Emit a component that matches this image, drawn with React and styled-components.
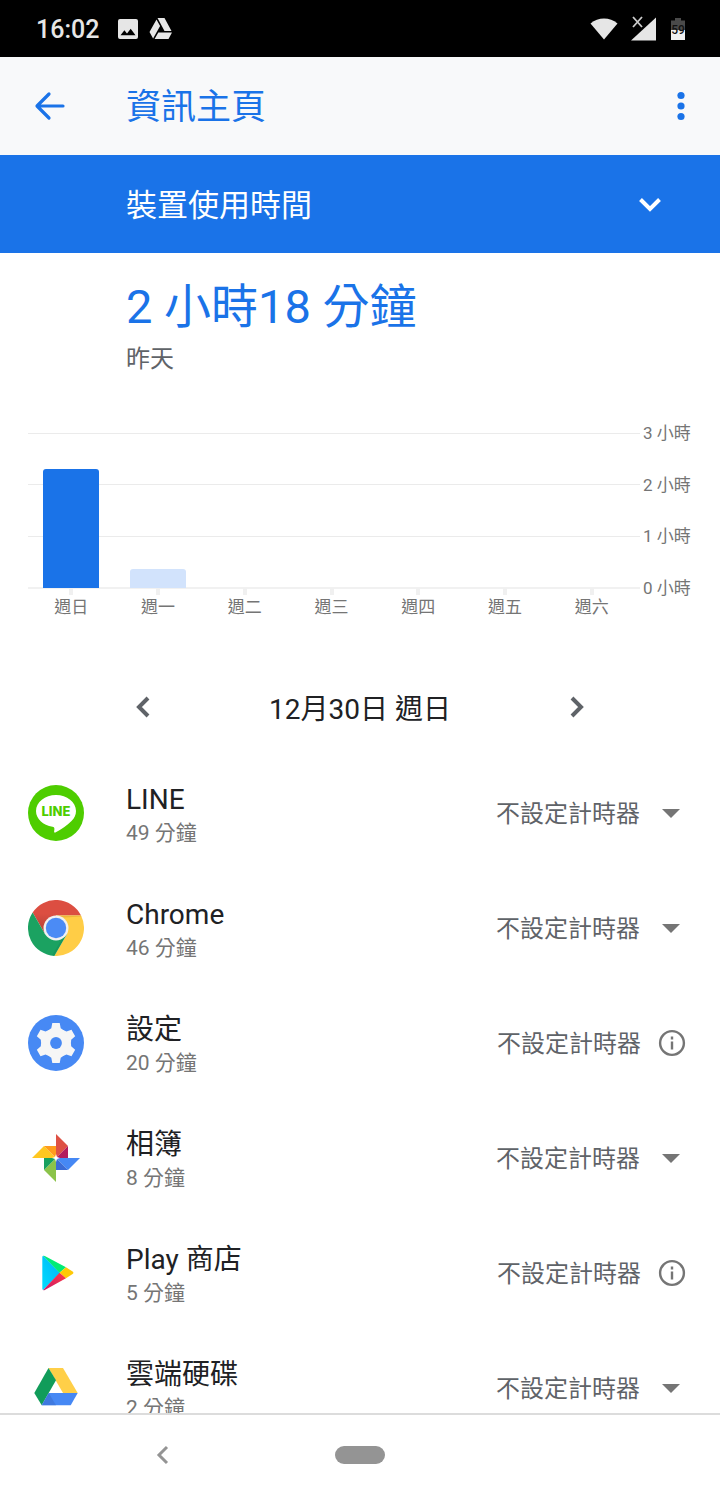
import React from "react";
import styled, { createGlobalStyle, css } from "styled-components";

const GlobalStyle = createGlobalStyle`
  *, *::before, *::after { box-sizing: border-box; }
  body {
    margin: 0;
    background: #fff;
    color: #202124;
    font-family: Roboto, "Noto Sans CJK TC", sans-serif;
  }
  h1, h2, h3, p, ul { margin: 0; padding: 0; font-weight: 400; }
  button, select { font: inherit; color: inherit; background: none; border: 0; padding: 0; margin: 0; }
  svg { display: block; }
`;

const BLUE = "#1a73e8";
const GREY = "#5f6368";
const FAINT = "#757575";

const Screen = styled.div`
  display: flex;
  flex-direction: column;
  height: 100vh;
`;

const StatusBar = styled.div`
  flex: none;
  display: flex;
  align-items: center;
  justify-content: space-between;
  height: 57px;
  padding: 0 34px 0 36px;
  background: #000;
  color: #e6e6e6;
`;

const StatusGroup = styled.div`
  display: flex;
  align-items: center;
  gap: ${(p) => p.$gap}px;
`;

const Clock = styled.time`
  margin-right: 8px;
  padding-top: 2px;
  font-size: 25px;
  font-weight: 500;
  line-height: 32px;
`;

const AppBar = styled.header`
  flex: none;
  display: flex;
  align-items: center;
  height: 98px;
  padding: 0 17px 0 28px;
  background: #f8f9fa;
  color: ${BLUE};
`;

const IconButton = styled.button`
  display: flex;
  align-items: center;
  justify-content: center;
  width: 44px;
  height: 44px;
  cursor: pointer;
`;

const Title = styled.h1`
  flex: 1;
  margin-left: 54px;
  padding-top: 4px;
  font-size: 35px;
  line-height: 48px;
`;

const MetricButton = styled.button`
  flex: none;
  display: flex;
  align-items: center;
  justify-content: space-between;
  height: 98px;
  padding: 0 49px 0 126px;
  background: ${BLUE};
  color: #fff;
  font-size: 31px;
  line-height: 44px;
  cursor: pointer;
`;

const MetricName = styled.span`
  padding-top: 4px;
`;

const Content = styled.main`
  flex: 1;
  min-height: 0;
  overflow: hidden;
`;

const Summary = styled.section`
  padding: 22px 28px 0 126px;
`;

const Total = styled.h2`
  color: ${BLUE};
  font-size: 47px;
  line-height: 64px;
`;

const Day = styled.p`
  color: ${GREY};
  font-size: 24px;
  line-height: 40px;
`;

const Chart = styled.section`
  display: grid;
  margin: 53px 28px 0;
  color: ${FAINT};
  font-size: 17px;
  line-height: 24px;
`;

const GridLines = styled.div`
  grid-area: 1 / 1;
  display: flex;
  flex-direction: column;
  justify-content: space-between;
  height: 157px;
`;

const GridLine = styled.div`
  display: flex;
  align-items: center;
  gap: 3px;
  height: 2px;

  &::before {
    content: "";
    flex: 1;
    height: ${(p) => (p.$base ? 2 : 1)}px;
    background: ${(p) => (p.$base ? "#f1f1f1" : "#ebebeb")};
  }
`;

const LineLabel = styled.span`
  width: 49px;
  white-space: nowrap;
`;

const Columns = styled.div`
  grid-area: 1 / 1;
  display: flex;
  margin-right: 57px;
`;

const Column = styled.div`
  flex: 1;
  display: flex;
  flex-direction: column;
  align-items: center;
`;

const BarSlot = styled.div`
  display: flex;
  align-items: flex-end;
  width: 56px;
  height: 156px;
`;

const Bar = styled.div`
  width: 100%;
  border-radius: 3px 3px 0 0;
  background: ${(p) => (p.$selected ? BLUE : "#d2e3fc")};
`;

const Tick = styled.span`
  width: 4px;
  height: 7px;
  background: #f0f0f0;
`;

const DateNav = styled.nav`
  display: flex;
  align-items: center;
  justify-content: space-between;
  height: 64px;
  margin-top: 56px;
  padding: 0 121px;
  color: ${GREY};
`;

const DateText = styled.span`
  padding-top: 5px;
  color: #202124;
  font-size: 28px;
  line-height: 40px;
`;

const AppList = styled.ul`
  margin-top: 16px;
  list-style: none;
`;

const AppRow = styled.li`
  display: flex;
  align-items: center;
  height: 115px;
  padding: 0 28px;
`;

const AppText = styled.div`
  flex: 1;
  margin-left: 42px;
  padding-top: 5px;
`;

const AppName = styled.h3`
  font-size: 28px;
  line-height: 36px;
`;

const AppTime = styled.p`
  color: ${FAINT};
  font-size: 21px;
  line-height: 30px;
`;

const timerText = css`
  padding-top: 3px;
  color: ${GREY};
  font-size: 24px;
  line-height: 36px;
`;

const Picker = styled.label`
  display: grid;
  align-items: center;
  color: ${FAINT};

  svg { grid-area: 1 / 1; justify-self: end; pointer-events: none; }
`;

const TimerSelect = styled.select`
  ${timerText}
  grid-area: 1 / 1;
  width: 196px;
  height: 48px;
  appearance: none;
  cursor: pointer;
`;

const Fixed = styled.div`
  display: flex;
  align-items: center;
  justify-content: space-between;
  width: 195px;
  color: ${FAINT};
`;

const FixedText = styled.span`
  ${timerText}
`;

const InfoButton = styled.button`
  margin-right: 6px;
  cursor: pointer;
`;

const NavBar = styled.nav`
  flex: none;
  display: grid;
  grid-template-columns: repeat(3, 1fr);
  place-items: center;
  height: 84px;
  padding: 0 63px 2px;
  border-top: 2px solid #dcdcdc;
  background: #fff;
  color: #949494;
`;

const HomePill = styled.button`
  width: 50px;
  height: 18px;
  border-radius: 9px;
  background: #949494;
`;

const Chevron = ({ d, size = 42, width = 4 }) => (
  <svg width={size} height={size} viewBox="0 0 42 42" fill="none" stroke="currentColor" strokeWidth={width}>
    <path d={d} />
  </svg>
);

const LineIcon = () => (
  <svg width="56" height="56" viewBox="0 0 56 56">
    <circle cx="28" cy="28" r="28" fill="#4ecd00" />
    <path fill="#fff" d="M28 10C17 10 8 17.1 8 26c0 7.900 7 14.500 16.500 15.700 1.500.3 2 1.100 1.900 2.500l-.3 2.500c0 .9.500 1.100 1.300.7C33.500 44.500 39 40.500 43.500 36 46.600 32.900 48 29.800 48 26c0-8.900-9-16-20-16z" />
    <text x="28" y="31" textAnchor="middle" fill="#4ecd00" fontFamily="Inter, sans-serif" fontWeight="800" fontSize="13">LINE</text>
  </svg>
);

const CHROME_BLADE = "M53.060 15.500A28 28 0 0 0 4.640 12.550L17.170 34.250 28 28V15.500z";

const ChromeIcon = () => (
  <svg width="56" height="56" viewBox="0 0 56 56">
    <defs>
      <linearGradient id="redShade" x1="0" y1="0" x2="0" y2="1">
        <stop offset=".4" stopColor="#dc4e41" />
        <stop offset=".75" stopColor="#c1453a" />
      </linearGradient>
    </defs>
    <path d={CHROME_BLADE} fill="url(#redShade)" />
    <path d={CHROME_BLADE} fill="#ffcd46" transform="rotate(120 28 28)" />
    <path d={CHROME_BLADE} fill="#1ba261" transform="rotate(240 28 28)" />
    <path d="M38.800 34.250 26.300 56l-2-1 9.500-15.500z" fill="#12814b" opacity=".3" />
    <path d="M28 15.500h25l.4 1L36 17.500z" fill="#d9a02c" opacity=".45" />
    <circle cx="28" cy="28" r="12.500" fill="#f1f1f1" />
    <circle cx="28" cy="28" r="10.200" fill="#4b8bf5" />
  </svg>
);

const SettingsIcon = () => (
  <svg width="56" height="56" viewBox="0 0 56 56">
    <circle cx="28" cy="28" r="28" fill="#4789f4" />
    <g fill="#f6f6f6">
      <circle cx="28" cy="28" r="14.400" />
      {[0, 60, 120, 180, 240, 300].map((a) => (
        <path key={a} d="M24.300 8h7.400l1 5.200q1.500.8 3 2.300l-3 4h-9.400l-3-4q1.500-1.500 3-2.300z" transform={`rotate(${a} 28 28)`} />
      ))}
    </g>
    <circle cx="28" cy="28" r="5.900" fill="#4789f4" />
  </svg>
);

const PhotosIcon = () => (
  <svg width="56" height="56" viewBox="0 0 56 56">
    <path fill="#de5144" d="M28 4l12 12-12 12z" />
    <path fill="#b31b5d" d="M40 16v12H28z" />
    <path fill="#4688f4" d="M52 28L40 40 28 28z" />
    <path fill="#3b6cd6" d="M40 40H28V28z" />
    <path fill="#8bc34a" d="M28 52L16 40l12-12z" />
    <path fill="#17a05e" d="M16 40V28h12z" />
    <path fill="#ffc720" d="M4 28l12-12 12 12z" />
    <path fill="#ff9c1c" d="M16 16h12v12z" />
    <path fill="#fff" d="M28 24l1 3 3 1-3 1-1 3-1-3-3-1 3-1z" />
  </svg>
);

const PlayIcon = () => (
  <svg width="56" height="56" viewBox="0 0 56 56">
    <defs>
      <linearGradient id="playBlue" x1="1" y1="0" x2="0" y2="1">
        <stop offset="0" stopColor="#00b3f5" />
        <stop offset="1" stopColor="#00dcff" />
      </linearGradient>
      <linearGradient id="playRed" x1="1" y1="0" x2="0" y2="1">
        <stop offset="0" stopColor="#ff3a44" />
        <stop offset="1" stopColor="#c9186a" />
      </linearGradient>
    </defs>
    <path fill="url(#playBlue)" d="M15.200 10.800Q14.300 11 14.300 12v31.800q0 1 .9 1.200L32 27.800z" />
    <path fill="#00ec76" d="M15.200 10.800q.7-.3 1.600.2L38 22.300l-6.500 5.500z" />
    <path fill="#ffc907" d="M38 22.300l6.600 4.200q1.500 1.200 0 2.500L38 33.300l-6.500-5.500z" />
    <path fill="url(#playRed)" d="M38 33.300L16.800 44.900q-.9.500-1.600.1l16.300-17.200z" />
  </svg>
);

const DriveIcon = () => (
  <svg width="56" height="56" viewBox="0 0 56 56">
    <path fill="#ffcf48" d="M20.500 8H35l14.700 25H35z" />
    <path fill="#119c5a" d="M20.500 8L28 20.300 13.700 45.300 6.300 33z" />
    <path fill="#4688f4" d="M20.700 33h29l-7 12.300h-29z" />
    <path fill="#3a6fd0" d="M20.700 33l7.300 12.300H13.700z" opacity=".6" />
  </svg>
);

const DropIcon = () => (
  <svg width="42" height="42" viewBox="0 0 42 42" fill="currentColor"><path d="M12 17h18l-9 9z" /></svg>
);

const InfoIcon = () => (
  <svg width="28" height="28" viewBox="0 0 28 28" fill="none" stroke="currentColor" strokeWidth="2.400">
    <circle cx="14" cy="14" r="11.900" />
    <path d="M14 12.500v8M14 7.600v2.800" />
  </svg>
);

const DAYS = [
  { name: "週日", hours: 2.28, selected: true },
  { name: "週一", hours: 0.36 },
  { name: "週二", hours: 0 },
  { name: "週三", hours: 0 },
  { name: "週四", hours: 0 },
  { name: "週五", hours: 0 },
  { name: "週六", hours: 0 },
];

const APPS = [
  { name: "LINE", time: "49 分鐘", Icon: LineIcon },
  { name: "Chrome", time: "46 分鐘", Icon: ChromeIcon },
  { name: "設定", time: "20 分鐘", Icon: SettingsIcon, fixed: true },
  { name: "相簿", time: "8 分鐘", Icon: PhotosIcon },
  { name: "Play 商店", time: "5 分鐘", Icon: PlayIcon, fixed: true },
  { name: "雲端硬碟", time: "2 分鐘", Icon: DriveIcon },
];

const NO_TIMER = "不設定計時器";

export default function App() {
  return (
    <Screen>
      <GlobalStyle />
      <StatusBar>
        <StatusGroup $gap={11}>
          <Clock>16:02</Clock>
          <svg width="20" height="20" viewBox="0 0 20 20">
            <path fill="#e6e6e6" fillRule="evenodd" d="M2 0h16a2 2 0 0 1 2 2v16a2 2 0 0 1-2 2H2a2 2 0 0 1-2-2V2a2 2 0 0 1 2-2zM2.500 16.200h15L12.700 9.800 9 14.500l-2.600-3.200z" />
          </svg>
          <svg width="24" height="22" viewBox="0 0 24 22" fill="#e6e6e6">
            <path d="M8.500 0h7l7 13h-7zM7.500 1.500l3.600 6.600L4.100 20.500.5 14zM9.300 14.500H23L19.500 21H5.600z" />
          </svg>
        </StatusGroup>
        <StatusGroup $gap={12}>
          <svg width="28" height="22" viewBox="0 0 28 22"><path fill="#e6e6e6" d="M.5 5.500Q6.500.5 14 .5t13.500 5L14 21.500z" /></svg>
          <svg width="28" height="26" viewBox="0 0 28 26">
            <path d="M3 1l9 10M12 1l-9 10" stroke="#ccc" strokeWidth="1.800" />
            <path fill="#e6e6e6" d="M26 1.500v23H1z" />
          </svg>
          <svg width="16" height="24" viewBox="0 0 16 24">
            <path fill="#4a4a4a" d="M5 1h6v2.500h4V13H1V3.500h4z" />
            <path fill="#f1f1f1" d="M1 13h14v10H1z" />
            <text x="8" y="17" textAnchor="middle" fontFamily="Roboto, sans-serif" fontWeight="500" fontSize="12" fill="#111">59</text>
          </svg>
        </StatusGroup>
      </StatusBar>

      <AppBar>
        <IconButton aria-label="返回">
          <svg width="32" height="32" viewBox="0 0 32 32" fill="none" stroke="currentColor" strokeWidth="3.200" strokeLinecap="round" strokeLinejoin="round">
            <path d="M29 16H3.500M15 4L3 16l12 12" />
          </svg>
        </IconButton>
        <Title>資訊主頁</Title>
        <IconButton aria-label="更多選項">
          <svg width="8" height="30" viewBox="0 0 8 30" fill="currentColor">
            <circle cx="4" cy="4.500" r="3.600" /><circle cx="4" cy="15" r="3.600" /><circle cx="4" cy="25.500" r="3.600" />
          </svg>
        </IconButton>
      </AppBar>

      <MetricButton>
        <MetricName>裝置使用時間</MetricName>
        <Chevron d="M11.500 16.500L21 26l9.500-9.500" />
      </MetricButton>

      <Content>
        <Summary>
          <Total>2 小時18 分鐘</Total>
          <Day>昨天</Day>
        </Summary>

        <Chart aria-label="裝置使用時間">
          <GridLines>
            {[3, 2, 1, 0].map((h) => (
              <GridLine key={h} $base={h === 0}><LineLabel>{h} 小時</LineLabel></GridLine>
            ))}
          </GridLines>
          <Columns>
            {DAYS.map((d) => (
              <Column key={d.name}>
                <BarSlot>
                  <Bar $selected={d.selected} style={{ height: `${(d.hours / 3) * 100}%` }} />
                </BarSlot>
                <Tick />
                {d.name}
              </Column>
            ))}
          </Columns>
        </Chart>

        <DateNav aria-label="日期">
          <IconButton aria-label="前一天"><Chevron d="M26 12l-9 9 9 9" /></IconButton>
          <DateText>12月30日 週日</DateText>
          <IconButton aria-label="後一天"><Chevron d="M16 12l9 9-9 9" /></IconButton>
        </DateNav>

        <AppList>
          {APPS.map(({ name, time, Icon, fixed }) => (
            <AppRow key={name}>
              <Icon />
              <AppText>
                <AppName>{name}</AppName>
                <AppTime>{time}</AppTime>
              </AppText>
              {fixed ? (
                <Fixed>
                  <FixedText>{NO_TIMER}</FixedText>
                  <InfoButton aria-label={`${name} 資訊`}><InfoIcon /></InfoButton>
                </Fixed>
              ) : (
                <Picker>
                  <TimerSelect aria-label={`${name} 計時器`}><option>{NO_TIMER}</option></TimerSelect>
                  <DropIcon />
                </Picker>
              )}
            </AppRow>
          ))}
        </AppList>
      </Content>

      <NavBar aria-label="系統導覽">
        <IconButton aria-label="返回上一頁"><Chevron d="M26 13l-8 8 8 8" width={3} /></IconButton>
        <HomePill aria-label="主畫面" />
      </NavBar>
    </Screen>
  );
}
